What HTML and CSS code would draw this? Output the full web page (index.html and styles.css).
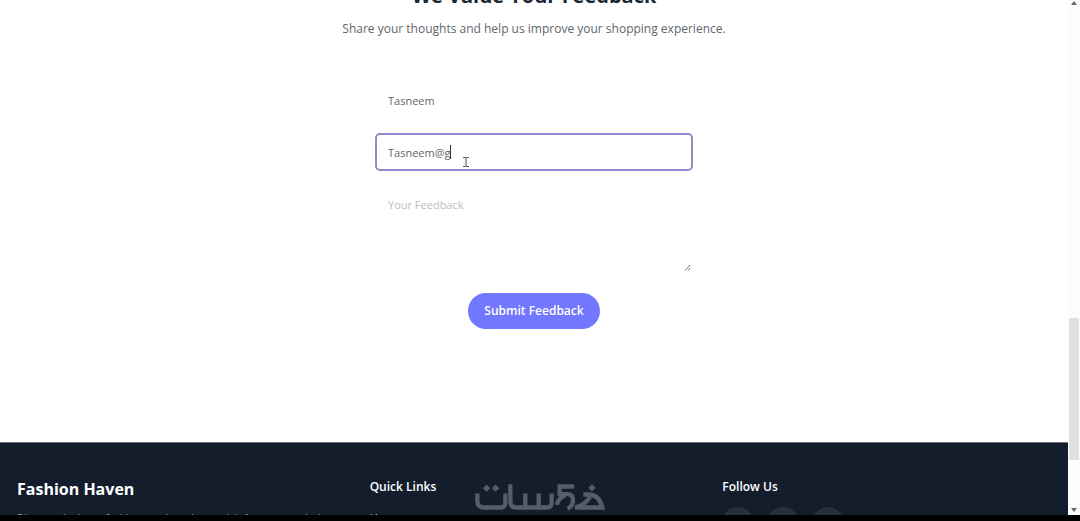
FILE: index.html
```html
<!DOCTYPE html>
<html lang="en">
<head>
<meta charset="utf-8">
<title>Fashion Haven</title>
<link rel="stylesheet" href="styles.css">
</head>
<body>
<div class="viewport">
  <div class="page">
    <main class="feedback">
      <h2 class="feedback-title">We Value Your Feedback</h2>
      <p class="feedback-intro">Share your thoughts and help us improve your shopping experience.</p>
      <form class="form">
        <input class="field" type="text" aria-label="Your Name" value="Tasneem">
        <div class="focused">
          <input class="field field-active" type="text" aria-label="Your Email" value="Tasneem@g">
          <span class="caret"></span>
          <svg class="cursor" viewBox="0 0 6 10" aria-hidden="true"><path d="M0 .5h2l1 .5 1-.5h2M3 1v8M0 9.500h2L3 9l1 .500h2"/></svg>
        </div>
        <div class="message">
          <textarea class="field field-message" aria-label="Your Feedback" placeholder="Your Feedback"></textarea>
          <svg class="grip" viewBox="0 0 7 7" aria-hidden="true"><path d="M1 6.500L6 1M4 6.500L6 4"/></svg>
        </div>
        <button class="submit" type="submit">Submit Feedback</button>
      </form>
    </main>
    <footer class="footer">
      <section>
        <h3 class="brand">Fashion Haven</h3>
        <p class="about">Discover the latest fashion trends and essentials for your wardrobe. We bring quality and style together.</p>
      </section>
      <section>
        <h4 class="footer-title">Quick Links</h4>
        <a class="footer-link" href="#">Home</a>
      </section>
      <section>
        <h4 class="footer-title">Follow Us</h4>
        <div class="social">
          <a class="social-link" href="#" aria-label="Facebook"></a>
          <a class="social-link" href="#" aria-label="Twitter"></a>
          <a class="social-link" href="#" aria-label="Instagram"></a>
        </div>
      </section>
    </footer>
  </div>
  <div class="scrollbar">
    <svg class="arrow" viewBox="0 0 6 4" aria-hidden="true"><path d="M0 4L3 0l3 4z"/></svg>
    <div class="thumb"></div>
    <svg class="arrow" viewBox="0 0 6 4" aria-hidden="true"><path d="M0 0h6L3 4z"/></svg>
  </div>
  <svg class="watermark" viewBox="0 0 390 80" role="img" aria-label="Khamsat">
    <g fill="none" stroke="currentColor" stroke-width="13">
      <path d="M7 28v22q0 20 20 20h50q14 0 14-14V28"/>
      <path d="M106 0v52q0 18 18 18h92q14 0 14-16V28M151 28v42M191 28v42"/>
      <path d="M298 7h-44v23h23q17 0 17 17 0 21-17 26M271 34q-22 8-25 28"/>
      <path d="M325 31h19q29 3 38 39h-82q28-5 45-32"/>
    </g>
    <path fill="currentColor" d="M35 1l11 11-11 11-11-11zM62 1l11 11-11 11-11-11zM351 0l11 11-11 11-11-11z"/>
  </svg>
</div>
</body>
</html>
```
FILE: styles.css
```css
* { box-sizing: border-box; }

body {
  margin: 0;
  background: #000;
  font-family: "Open Sans", "Noto Sans", sans-serif;
  font-size: 12px;
  color: #5f666b;
}

h2, h3, h4, p { margin: 0; }

.viewport {
  position: relative;
  display: flex;
  height: calc(100vh - 6px);
  overflow: hidden;
  background: #fff;
}

.page { flex: 1; min-width: 0; }

.feedback {
  display: flex;
  flex-direction: column;
  align-items: center;
  margin-top: -20px;
  padding-bottom: 113px;
}

.feedback-title {
  font-size: 20px;
  line-height: 32px;
  color: #1c2733;
}

.feedback-intro {
  margin-top: 8px;
  font-size: 12px;
  line-height: 18px;
}

.form {
  display: flex;
  flex-direction: column;
  align-items: center;
  gap: 14px;
  width: 318px;
  margin-top: 43px;
}

.field {
  display: block;
  width: 100%;
  height: 38px;
  padding: 0 11px;
  border: 2px solid transparent;
  border-radius: 5px;
  outline: none;
  background: transparent;
  font: 11px/16px "Open Sans", "Noto Sans", sans-serif;
  color: #5f666b;
}

.field-active { border-color: #8c8ccb; }

.focused, .message { position: relative; width: 100%; }

.caret {
  position: absolute;
  left: 75px;
  top: 12px;
  width: 1px;
  height: 14px;
  background: #333;
}

.cursor {
  position: absolute;
  left: 88px;
  top: 24px;
  width: 6px;
  height: 10px;
  fill: none;
  stroke: #555;
}

.field-message {
  height: 88px;
  padding-top: 10px;
  resize: none;
}

.field-message::placeholder { color: #bbbdbf; }

.grip {
  position: absolute;
  right: 2px;
  bottom: 2px;
  width: 7px;
  height: 7px;
  fill: none;
  stroke: #777;
}

.submit {
  height: 36px;
  margin-top: 6px;
  padding: 0 16px;
  border: 0;
  border-radius: 18px;
  background: #7277ff;
  color: #fff;
  font: 600 12px/18px "Open Sans", "Noto Sans", sans-serif;
}

.footer {
  display: grid;
  grid-template-columns: repeat(3, 1fr);
  gap: 24px;
  padding: 34px 17px;
  border-top: 1px solid #6e7680;
  background: #131d2c;
  color: #fff;
}

.brand { font-size: 16px; line-height: 24px; }

.about {
  margin-top: 8px;
  font-size: 10px;
  line-height: 18px;
  color: #9da3ae;
}

.footer-title { font-size: 12px; line-height: 20px; font-weight: 600; }

.footer-link {
  display: block;
  margin-top: 12px;
  font-size: 11px;
  line-height: 18px;
  color: #d1d5db;
  text-decoration: none;
}

.social { display: flex; gap: 13px; margin-top: 10px; }

.social-link {
  width: 32px;
  height: 32px;
  border-radius: 50%;
  background: #263140;
}

.scrollbar {
  display: flex;
  flex-direction: column;
  align-items: center;
  width: 12px;
  padding: 1px 1px 3px;
  background: #fcfcfc;
}

.arrow { width: 6px; height: 4px; fill: #666; }

.thumb {
  width: 10px;
  height: 142px;
  margin-top: auto;
  margin-bottom: 48px;
  background: #e0e0e0;
}

.watermark {
  position: absolute;
  left: 475px;
  bottom: 4px;
  width: 130px;
  height: 27px;
  color: #555d69;
}
```
